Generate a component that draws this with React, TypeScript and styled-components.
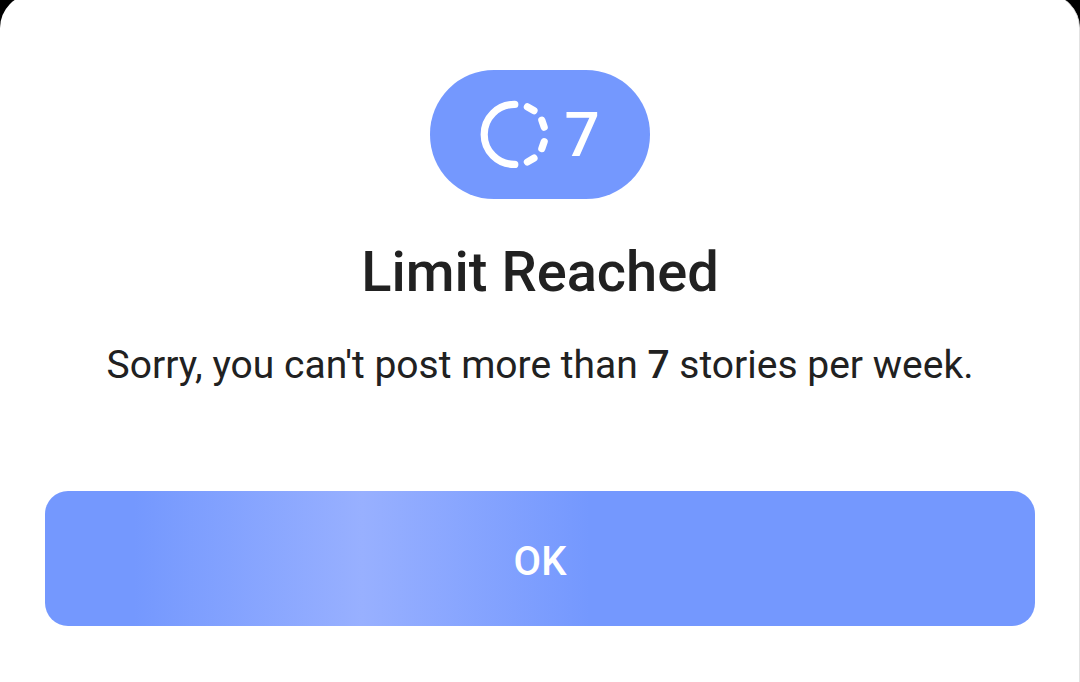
import React from "react";
import styled, { createGlobalStyle } from "styled-components";

const GlobalStyle = createGlobalStyle`
  * { box-sizing: border-box; }
  html, body, #root { height: 100%; }
  body {
    margin: 0;
    background: #000;
    color: #212121;
    font-family: Roboto, "Liberation Sans", sans-serif;
  }
`;

const Page = styled.div`
  display: flex;
  min-height: 100%;
`;

const Sheet = styled.main`
  flex: 1;
  display: flex;
  flex-direction: column;
  align-items: center;
  margin-top: -6px;
  padding: 76px 44px 56px 45px;
  border-right: 1px solid #e2e2e2;
  border-radius: 34px 34px 0 0;
  background: #fff;
`;

const Badge = styled.div`
  display: flex;
  align-items: center;
  gap: 14px;
  height: 129px;
  padding: 0 50px;
  border-radius: 64px;
  background: #7498fe;
  color: #fff;
`;

const BadgeCount = styled.span`
  font-size: 62px;
  line-height: 72px;
  font-weight: 500;
`;

const Title = styled.h1`
  margin: 40px 0 0;
  font-size: 56px;
  line-height: 66px;
  font-weight: 500;
  text-align: center;
`;

const Message = styled.p`
  margin: 37px 0 0;
  font-size: 39px;
  line-height: 46px;
  text-align: center;

  strong { font-weight: 500; }
`;

const ConfirmButton = styled.button`
  width: 100%;
  height: 135px;
  margin: 103px 0 0;
  padding: 6px 0 0;
  border: 0;
  border-radius: 23px;
  background: linear-gradient(90deg, #7498fe 9%, #98b0ff 32%, #7498fe 55%);
  color: #fff;
  font: inherit;
  font-size: 40px;
  line-height: 46px;
  font-weight: 500;
  cursor: pointer;
`;

function StoryIcon() {
  return (
    <svg width="70" height="70" viewBox="-34.2 -34.4 70 70" fill="none" stroke="#fff" strokeWidth="7.2" strokeLinecap="round" aria-hidden="true">
      <path d="M0.6 -30H0A30 30 0 0 0 0 30H0.6" />
      <path d="M13.2 -27.6L19.8 -23.7" />
      <path d="M27.6 -14.2L30 -7.2" />
      <path d="M27.6 14.2L30 7.2" />
      <path d="M13.2 27.6L19.8 23.7" />
    </svg>
  );
}

export default function App() {
  return (
    <>
      <GlobalStyle />
      <Page>
        <Sheet>
          <Badge>
            <StoryIcon />
            <BadgeCount>7</BadgeCount>
          </Badge>
          <Title>Limit Reached</Title>
          <Message>
            Sorry, you can't post more than <strong>7</strong> stories per week.
          </Message>
          <ConfirmButton type="button">OK</ConfirmButton>
        </Sheet>
      </Page>
    </>
  );
}
